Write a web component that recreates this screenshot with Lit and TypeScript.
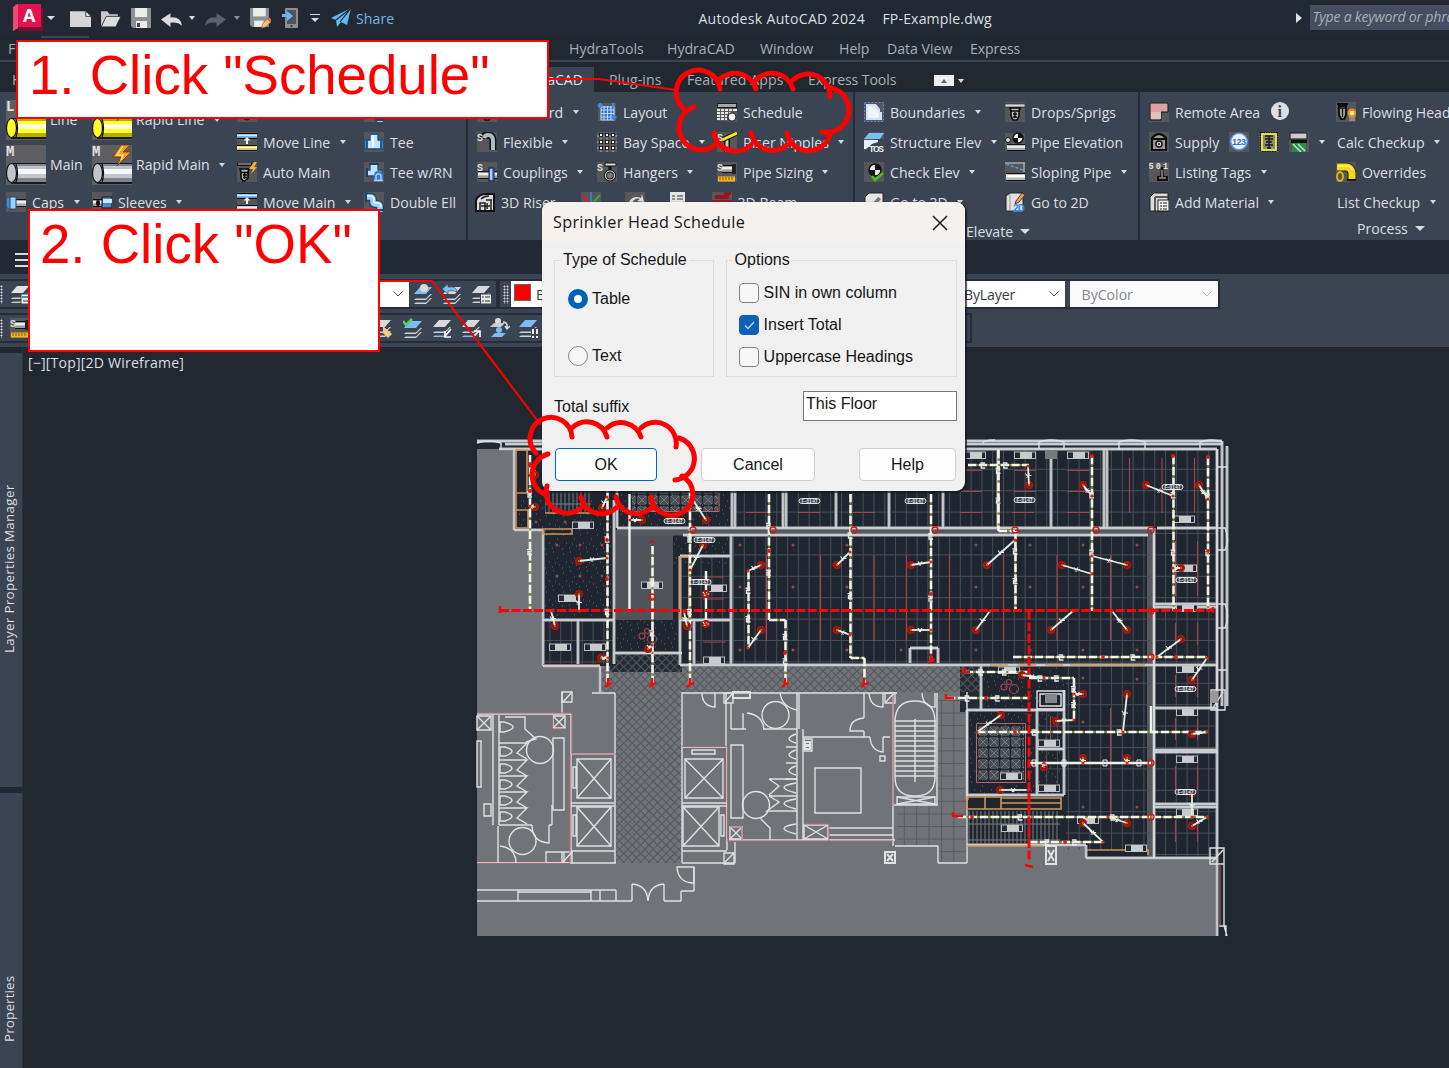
import { LitElement, html, svg, css, nothing } from "lit";
import { customElement, property } from "lit/decorators.js";

/* ---------- icon artwork ---------- */

const tile = svg`<rect width="20" height="20" fill="#57575a"/>`;
const ess = svg`<text x="0" y="9" font-size="10" font-weight="700" fill="#d8d8d8" font-family="Liberation Mono">S</text>`;

const pipe = (x: number, y: number, w: number, h: number, c: string, hi: string) => svg`
  <rect x=${x} y=${y} width=${w} height=${h} fill="#111"/>
  <rect x=${x} y=${y + 1} width=${w} height=${h - 2} fill=${c}/>
  <rect x=${x} y=${y + h * 0.25} width=${w} height=${h * 0.3} fill=${hi}/>`;

const sheets = (c1: string, c2: string, c3: string, x = 0, y = 0) => svg`
  <g transform="translate(${x} ${y})">
    <path d="M7 8h12l-6 6H1z" fill=${c3} transform="translate(0 5)"/>
    <path d="M7 8h12l-6 6H1z" fill="#3b4453" transform="translate(0 3.5)"/>
    <path d="M7 8h12l-6 6H1z" fill=${c2} transform="translate(0 1)"/>
    <path d="M7 8h12l-6 6H1z" fill="#3b4453" transform="translate(0 -.5)"/>
    <path d="M7 2h12l-6 7H1z" fill=${c1}/>
  </g>`;

const bigPipe = (letter: string, c: string, mid: string, hi: string, bolt: boolean) => svg`
  <rect width="40" height="40" fill="#5f5f61"/>
  <text x="0" y="11" font-size="14" font-weight="700" fill="#e2e2e2" font-family="Liberation Mono">${letter}</text>
  <rect x="5" y="18" width="35" height="21" fill="#1a1a1a"/>
  <rect x="5" y="19" width="35" height="18" fill=${c}/>
  <rect x="10" y="21" width="30" height="12" fill=${mid}/>
  <rect x="10" y="24" width="30" height="5" fill=${hi}/>
  <ellipse cx="5.5" cy="28" rx="5" ry="9.5" fill=${mid} stroke="#111" stroke-width="1.2"/>
  <path d="M10 19q3 9 0 18" fill="none" stroke="#111" stroke-width="1.3"/>
  ${bolt ? svg`<path d="M29 0 21 12h8l-4 9 14-14h-8l7-7z" fill="#ff9a1a" stroke="#7a3b00" stroke-width=".8"/><path d="M31 1l-6 9h6l-2 5" fill="none" stroke="#ffe9a0" stroke-width="1.3"/>` : nothing}`;

const icons: Record<string, unknown> = {
  line: bigPipe("L", "#b5ad00", "#ffff2a", "#ffffd8", false),
  rapidLine: bigPipe("L", "#b5ad00", "#ffff2a", "#ffffd8", true),
  main: bigPipe("M", "#7c8490", "#c0c5ce", "#f7f8fa", false),
  rapidMain: bigPipe("M", "#7c8490", "#c0c5ce", "#f7f8fa", true),
  caps: svg`${tile}${pipe(9, 7, 11, 8, "#aaa", "#eee")}<rect x="1" y="6" width="4" height="10" rx="2" fill="#3b8ee0"/><rect x="4" y="5" width="6" height="12" fill="#9ad2ff" stroke="#1b4c8a"/>`,
  sleeves: svg`${tile}${pipe(1, 7, 10, 8, "#999", "#eee")}<rect x="10" y="5" width="10" height="11" fill="#4c86d0" stroke="#111"/><rect x="11" y="7" width="9" height="4" fill="#cfe8ff"/><ellipse cx="6" cy="11" rx="2" ry="3" fill="#111"/>`,
  sprink: svg`${tile}<path d="M0 2h20v2H0z" fill="#ddd"/><path d="M5 6h10M6 9h8M6 9v6q4 5 8 0V9M10 8v8" stroke="#111" stroke-width="2" fill="none"/>`,
  moveLine: svg`${tile}${pipe(0, 1, 20, 6, "#4f9ae0", "#d7efff")}${pipe(0, 13, 20, 6, "#d8c860", "#fff6b0")}<path d="M10 5 6.500 8.500h2.500V12h2V8.500h2.500z" fill="#eee"/>`,
  autoMain: svg`<rect y="2" width="20" height="18" fill="#57575a"/><path d="M0 1h15v3H0z" fill="#111"/><path d="M1 2h13" stroke="#ccc"/><path d="M3 7h9l-1 3v6l-3 3H6l-2-3v-6z" fill="#b5b5b5" stroke="#0a0a0a" stroke-width="1.600"/><path d="M4 10.500h8M6 13h4M6 15.500h4M7.500 11v6" stroke="#0a0a0a" stroke-width="1.300" fill="none"/><path d="M17 0l-5 7h4l-2 5 6-7h-3l3-5z" fill="#ffb02a"/>`,
  moveMain: svg`${tile}${pipe(0, 1, 20, 6, "#4f9ae0", "#d7efff")}${pipe(0, 13, 20, 6, "#aaa", "#f2f2f2")}<path d="M10 5 6.500 8.500h2.500V12h2V8.500h2.500z" fill="#eee"/>`,
  tee: svg`${tile}<path d="M6 2h8v6h5v9H1V8h5z" fill="#bfe4fb" stroke="#1b4c7a" stroke-width="1.3"/><path d="M5 2h10M3 6v12M17 6v12" stroke="#1d5b96" stroke-width="2"/><path d="M9 3v12" stroke="#fff" stroke-width="2"/>`,
  teeRn: svg`${tile}<path d="M6 2h8v6h4v6H3V8h3z" fill="#bfe4fb" stroke="#1b4c7a" stroke-width="1.3"/><path d="M5 2h10M3 6v9" stroke="#1d3e66" stroke-width="2"/><path d="M10 18v-5q0-4 4.500-4t4.500 4v5z" fill="#3a78cc"/><path d="M12 18v-4q0-2 2.500-2t2.500 2v4M10 18.500h9" stroke="#a9d4ff" stroke-width="1.3" fill="none"/>`,
  ell: svg`${tile}<path d="M1 5h5q3 0 3 3v2q0 2 3 2h1q3 0 3 3v5" fill="none" stroke="#17456f" stroke-width="8"/><path d="M1 5h5q3 0 3 3v2q0 2 3 2h1q3 0 3 3v5" fill="none" stroke="#9bd3f7" stroke-width="5.500"/><path d="M1 4h5q4 0 4 4v2q0 1 3 1 4 0 4 4" fill="none" stroke="#e9f7ff" stroke-width="1.600"/><path d="M2 0v10M11 18h9" stroke="#17456f" stroke-width="2"/>`,
  flexible: svg`${tile}<path d="M6 7q0-4 5-4 5 0 5 6v9" fill="none" stroke="#111" stroke-width="7"/><path d="M7 6q1-3 4-3 5 0 5 6v9" fill="none" stroke="#a8c0c4" stroke-width="4"/>${ess}`,
  couplings: svg`${tile}${pipe(1, 9, 19, 8, "#999", "#eee")}<rect x="12" y="6" width="5" height="13" fill="#4d86d8" stroke="#123"/><path d="M14 7v11" stroke="#d6eaff" stroke-width="1.4"/>${ess}`,
  riser: svg`<path d="M1 18V8q3-6 10-6h8v17H1z" fill="#dcdcdc" stroke="#111" stroke-width="2"/><path d="M5 18v-7h5v7M6 7q3-3 8-3M11 8h6M12 11v6M16 8v10M6 14h9" stroke="#222" stroke-width="1.500" fill="none"/>`,
  layout: svg`<rect x="1" y="1" width="18" height="18" fill="#57575a"/><path d="M4 5h13v13H4zM4 8h13M4 11.500h13M4 15h13M7 4v14M10.500 4v14M14 4v14" fill="#2f6dbd" stroke="#bcd9fb" stroke-width="1.100"/><path d="M3 1v5M.500 3.500h5M17 13v5M14.500 15.500h5M16 1v5" stroke="#3a8cf0" stroke-width="2"/>`,
  bay: svg`${tile}<path d="M0 4h20M0 10h20M0 16h20M4 0v20M10 0v20M16 0v20" stroke="#c2c2c2"/><g fill="#111">${[4, 10, 16].map((x) => [3, 10, 16].map((y) => svg`<circle cx=${x} cy=${y} r="2.400"/><circle cx=${x} cy=${y} r="1.200" fill="#fff"/>`))}</g>`,
  hangers: svg`${tile}<path d="M8 1h11v3H8z" fill="#ddd" stroke="#111"/><path d="M13 4v5" stroke="#111" stroke-width="3"/><circle cx="13" cy="13.500" r="4.500" fill="#777" stroke="#111" stroke-width="3"/><circle cx="13" cy="13.500" r="4.500" fill="none" stroke="#ddd" stroke-width="1.200"/>${ess}`,
  schedule: svg`<path d="M0 1h20v5H0z" fill="#1c1c1c"/><path d="M1 2h18v3H1z" fill="#a5a5a8"/><path d="M0 6h20v13H0z" fill="#e8e8e8"/><path d="M0 6.500h20M0 9.500h20M0 12.500h20M0 15.500h11M0 18.500h11M3.500 6v13M7.500 6v13M11.500 6v8M15.500 6v5" stroke="#5a5a5a"/><path d="M10 20v-6q2-4 6-4h4v10z" fill="#57575a"/><circle cx="15" cy="15" r="4" fill="#f4f4f4" stroke="#222" stroke-width="1.200"/>`,
  nipple: svg`${tile}<path d="M10 7v13" stroke="#111" stroke-width="6"/><path d="M10 8v12" stroke="#ccc" stroke-width="3"/><path d="M5 8 20 1" stroke="#111" stroke-width="5"/><path d="M5 8 20 1" stroke="#f0e61c" stroke-width="3"/>${ess}`,
  sizing: svg`${tile}${pipe(5, 3, 14, 8, "#999", "#eee")}<rect x="15" y="2" width="4" height="10" fill="#222"/><rect x="1" y="14.500" width="17" height="5" fill="#f3b722"/><path d="M3 15v3M6 15v3M9 15v3M12 15v3M15 15v3" stroke="#7a5200"/>${ess}`,
  ucs: svg`${tile}<path d="M10 10V0" stroke="#3a78cc" stroke-width="2"/><path d="M9 12 1 3" stroke="#c22" stroke-width="2"/><path d="M11 12l8-9" stroke="#3a3" stroke-width="2"/>`,
  refresh: svg`${tile}<path d="M4 10q4-7 12-4l1-4 2 8-7-1 3-2q-5-2-8 4z" fill="#ddd"/>`,
  tag: svg`<path d="M2 0h15v10H2z" fill="#e4e4e4"/><path d="M4 4h3M9 4h6M4 7h3M9 7h6" stroke="#333"/>`,
  valve: svg`${tile}<path d="M3 5h13M12 1h7M15 1v6M0 10h20" stroke="#a0141e" stroke-width="4"/>`,
  boundaries: svg`<rect x=".500" y=".500" width="19" height="19" fill="#57575a" stroke="#4b8fe8" stroke-dasharray="2 1.500"/><path d="M2 2h10l4 5v3h2v8H2z" fill="#d5e2f2"/><path d="M4 4h6l4 5v2h1v5H4z" fill="#eef4fb"/>`,
  tos: svg`<path d="M0 20V6L6 0h14v7h-9z" fill="#555"/><path d="M5 1h15l-4 6H0z" fill="#79c0f4"/><path d="M0 8h14v2L8 12 2 17H0z" fill="#e9eef2"/><text x="5" y="19.500" font-size="8.500" font-weight="700" fill="#f2f2f2" font-family="Liberation Sans" textLength="15">TOS</text>`,
  checkElev: svg`${tile}<circle cx="11" cy="8" r="6" fill="#e8e8e8" stroke="#111" stroke-width="1.500"/><path d="M11 2a6 6 0 0 1 6 6h-6zM11 14a6 6 0 0 1-6-6h6z" fill="#111"/><path d="M8 14l3 4 8-7" stroke="#4fb81e" stroke-width="2.600" fill="none"/>`,
  to3d: svg`<path d="M1 20V5l4-4h14v19z" fill="#e6e6e6" stroke="#222"/><path d="M8 12l6-7 3 2-6 7z" fill="#777"/>`,
  drops: svg`${tile}<rect width="20" height="3" y="2" fill="#d9d9d9" stroke="#111" stroke-width=".600"/><path d="M5 6h10l-1 3v5l-2 4H8l-2-4V9z" fill="#b9b9b9" stroke="#0a0a0a" stroke-width="1.600"/><path d="M5 9h10M8 12h4M10 10v6M8 15h4" stroke="#0a0a0a" stroke-width="1.300"/>`,
  pipeElev: svg`<rect y="1" width="20" height="18" fill="#57575a"/>${pipe(2, 12, 18, 7, "#aaa", "#eee")}<circle cx="13" cy="6" r="5" fill="#eee" stroke="#111" stroke-width="1.400"/><path d="M13 1a5 5 0 0 1 5 5h-5zM13 11a5 5 0 0 1-5-5h5z" fill="#111"/><circle cx="3" cy="8" r="2.500" fill="#ddd" stroke="#111"/>`,
  sloping: svg`${tile}<path d="M0 1h20M19 1v9" stroke="#ccc"/><path d="M1 2l17 6" stroke="#5a9be8" stroke-width="1.600" stroke-dasharray="3 2"/>${pipe(1, 11, 19, 8, "#bbb", "#fff")}`,
  to2d: svg`<path d="M1 19V4l4-3h13v18z" fill="#e0e0e0" stroke="#222"/><path d="M5 2v17" stroke="#999"/><path d="M11 9l6-8 3 2-6 7-4 2z" fill="#e7a33a" stroke="#633"/><text x="8" y="19.500" font-size="10" font-weight="700" fill="#2b8af0" font-family="Liberation Sans" textLength="12">2D</text>`,
  remote: svg`${tile}<path d="M1 1h18v9h-7v8H1z" fill="#d9a3a5" stroke="#111"/><path d="M2 10h10v7H2z" fill="#e0c2c2"/>`,
  info: svg`<circle cx="10" cy="9" r="9" fill="#dcdee0"/><text x="7.500" y="15" font-size="16" font-weight="700" fill="#3b4453" font-family="Liberation Serif">i</text>`,
  supply: svg`${tile}<path d="M3 6q7-8 14 0v12H3z" fill="#999" stroke="#0a0a0a" stroke-width="2"/><path d="M2 7h16M3 18h14" stroke="#0a0a0a" stroke-width="2"/><circle cx="10" cy="12" r="3" fill="#ddd" stroke="#111" stroke-width="1.500"/><circle cx="10" cy="12" r="1" fill="#111"/>`,
  n123: svg`${tile}<circle cx="10" cy="9.500" r="9" fill="#5b9cf2"/><circle cx="10" cy="9.500" r="7.500" fill="#f2f7ff"/><text x="3" y="13" font-size="9" font-weight="700" fill="#2c6fdc" font-family="Liberation Sans" textLength="14">123</text>`,
  headBox: svg`<rect width="20" height="20" fill="#57575a"/><rect x="2" y="1" width="16" height="18" fill="#8a8a70" stroke="#111" stroke-width="2.500" stroke-dasharray="1.500 1"/><rect x="3" y="2" width="14" height="16" fill="#8a8a70" stroke="#f0ee4a" stroke-width="1.800"/><path d="M6 4h8M6 7h8M7 10h6M6 13h8M8 16h4M10 4v13" stroke="#1a1a1a" stroke-width="1.300"/>`,
  calc: svg`${tile}<rect x="1" y="1" width="17" height="6" fill="#ccc" stroke="#111"/><rect x="2" y="8" width="16" height="3" fill="#111"/><rect x="3" y="11" width="14" height="9" fill="#2a8a50"/><path d="M4 12l8 8M9 12l7 7" stroke="#bfe8cc" stroke-width="1.500"/>`,
  tags: svg`${tile}<text x="-.500" y="7" font-size="8.500" font-weight="700" fill="#e2e2e2" font-family="Liberation Mono" textLength="19.500">501</text><path d="M12 5h2l1 9h4v5H8v-5h3z" fill="#111"/><path d="M10 16h7M13 8v7" stroke="#ccc"/>`,
  material: svg`<path d="M1 19V5l4-4h14v18z" fill="#dcdcdc" stroke="#222"/><path d="M6 5h13M6 5v14" stroke="#333" stroke-width="1.500"/><rect x="9" y="8" width="11" height="11" fill="#f2f2f2" stroke="#222"/><path d="M11 11h2M14 11h4M11 14h2M14 14h4M11 17h2M14 17h4" stroke="#222" stroke-width="1.200"/>`,
  flowing: svg`${tile}<path d="M1 2h11M3 4h7v9l-2 4H5l-2-4z" stroke="#0a0a0a" stroke-width="1.800" fill="#a5a5a5"/><path d="M3 6h7M6.500 7v8" stroke="#0a0a0a" stroke-width="1.300"/><rect x="13" y="9" width="6" height="10" fill="#8a8a8a"/><circle cx="16" cy="11" r="4.500" fill="#f08a24"/><circle cx="16" cy="11" r="2.300" fill="#fff3a0"/>`,
  overrides: svg`${tile}<path d="M1 5h9q5 0 6 6v6" stroke="#222" stroke-width="9" fill="none"/><path d="M1 5h9q5 0 6 6v6" stroke="#f5d815" stroke-width="7" fill="none"/><path d="M2 4h8q5 0 6 4" stroke="#fff27a" stroke-width="1.500" fill="none"/><path d="M11 18h9" stroke="#111" stroke-width="2"/><ellipse cx="4" cy="14.500" rx="3" ry="4.500" fill="#57575a" stroke="#e2b90c" stroke-width="1.800"/>`,

  newFile: svg`<path d="M0 3h15l5 5v10H0z" fill="#d6d6d6"/><path d="M15 3v5h5z" fill="#f5f5f5" stroke="#222932" stroke-width=".8"/>`,
  open: svg`<path d="M1 18V3h6l2 3h8v3H6z" fill="#c9c9c9"/><path d="M6 8h14l-5 10H1z" fill="#dcdcdc" stroke="#222932" stroke-width=".8"/>`,
  save: svg`<path d="M0 0h20v20H2l-2-2z" fill="#8d9092"/><rect x="4" y="0" width="12" height="9" fill="#ececec"/><rect x="5" y="13" width="11" height="7" fill="#ececec"/><rect x="6" y="15" width="3" height="4" fill="#444"/>`,
  undo: svg`<path d="M0 11 9 5v4q10-1 11 8-4-4-11-3v4z" fill="#dcdcdc"/>`,
  redo: svg`<path d="M20 11 11 5v4Q1 8 0 17q4-4 11-3v4z" fill="#5a616b"/>`,
  saveAs: svg`<path d="M0 0h18v18H2l-2-2z" fill="#8d9092"/><rect x="3" y="0" width="12" height="8" fill="#ececec"/><rect x="4" y="12" width="9" height="6" fill="#ececec"/><path d="M11 19l1-4 6-6 3 3-6 6z" fill="#f4c469" stroke="#a0522d" stroke-width=".6"/><path d="M17 10l3 3" stroke="#e2574c" stroke-width="2"/>`,
  phone: svg`<rect x="4" y="0" width="13" height="20" rx="1" fill="#8b8f94"/><rect x="6" y="2" width="9" height="14" fill="#4d545e"/><circle cx="10.500" cy="18" r="1" fill="#222"/><path d="M1 6h5V3l6 5-6 5V9H1z" fill="#62b8f5"/>`,
  plane: svg`<path d="M0 10 20 0 16 17l-6-3-4 5-1-7z" fill="#62b8f5"/><path d="M5 12 20 0 9 14" fill="none" stroke="#222932" stroke-width="1.200"/>`,

  layerProps: svg`${sheets("#e3e3e3", "#d3d3d3", "#c8c8c8")}<rect x="11" y="10" width="10" height="10" fill="#f2f2f2" stroke="#3b4453"/><path d="M12 13h6" stroke="#3a8cd8" stroke-width="2"/><path d="M13 17h5" stroke="#333"/>`,
  layerMatch: svg`${sheets("#7cbdf2", "#d3d3d3", "#d3d3d3", 0, 1)}<circle cx="11" cy="4" r="4" fill="#d9d9d9"/>`,
  layerPrev: svg`${sheets("#d9d9d9", "#d3d3d3", "#d3d3d3", 0, 1)}<path d="M0 5l6-5v3q9-1 9 5-3-2-9-1v3z" fill="#7cbdf2" stroke="#3b4453" stroke-width=".6"/>`,
  layerState: svg`${sheets("#d9d9d9", "#d3d3d3", "#d3d3d3")}<rect x="9.500" y="10" width="11" height="10" fill="#e9e9e9" stroke="#3b4453"/><path d="M11 13h2M14 13h5M11 17h2M14 17h5" stroke="#333"/>`,
  layerBrush: svg`${sheets("#d9d9d9", "#d3d3d3", "#d3d3d3", -2)}<path d="M9 8l9 8-4 4-5-5z" fill="#f0cf8a"/>`,
  layerCheck: svg`${sheets("#7cbdf2", "#d3d3d3", "#d3d3d3", 0, 1)}<path d="M0 3l3 4 6-6" stroke="#59cf72" stroke-width="2.500" fill="none"/>`,
  layerArrow: svg`${sheets("#d9d9d9", "#d3d3d3", "#7cbdf2")}<path d="M19 11l-6 7m0-5v6h6" stroke="#fff" stroke-width="1.600" fill="none"/>`,
  layerArrow2: svg`${sheets("#d9d9d9", "#d3d3d3", "#7cbdf2")}<path d="M12 19l6-6m-5 0h6v6" stroke="#fff" stroke-width="1.600" fill="none"/>`,
  layerOne: svg`<circle cx="8" cy="3" r="3" fill="#ddd"/><path d="M4 5h11l-4 4H0z" fill="#ccc"/><circle cx="9" cy="12" r="3" fill="#7cbdf2"/><path d="M5 15h11l-4 4H1z" fill="#7cbdf2"/><path d="M13 4q5 0 4 6m-2-2 2 3 3-3" stroke="#ddd" stroke-width="1.400" fill="none"/>`,
  layerLast: svg`${sheets("#7cbdf2", "#d3d3d3", "#d3d3d3", -1)}<path d="M12 10h8v10h-8z" fill="#3b4453"/><path d="M14 11v5M18 11v5M14 18v2M18 18v2" stroke="#eee" stroke-width="2"/>`,
};

@customElement("cad-icon")
class CadIcon extends LitElement {
  @property() name = "";
  @property({ type: Number }) size = 20;
  static styles = css`
    :host { display: block; flex: none; }
    svg { display: block; overflow: hidden; }
  `;
  render() {
    const box = this.size === 40 ? 40 : 20;
    return html`<svg width=${this.size} height=${this.size} viewBox="0 0 ${box} ${box}">${icons[this.name] ?? nothing}</svg>`;
  }
}

/* ---------- ribbon command ---------- */

interface Cmd { icon?: string; label?: string; caret?: boolean; big?: boolean; extras?: string[]; }

@customElement("ribbon-cmd")
class RibbonCmd extends LitElement {
  @property({ attribute: false }) cmd: Cmd = {};
  static styles = css`
    :host { display: block; }
    .cmd { display: flex; align-items: center; height: 30px; white-space: nowrap; }
    .big { height: 45px; }
    .label { margin-left: 6px; }
    .big .label { margin-left: 4px; }
    .flush { margin-left: 1px; }
    .caret { width: 0; height: 0; margin-left: 9.5px; border: 3.5px solid transparent; border-top: 4px solid #d5d8dc; border-bottom: 0; flex: none; }
    .extra { margin-left: 10px; }
  `;
  render() {
    const c = this.cmd;
    return html`<div class="cmd ${c.big ? "big" : ""}">
      ${c.icon ? html`<cad-icon name=${c.icon} size=${c.big ? 40 : 20}></cad-icon>` : nothing}
      ${c.label ? html`<span class="label ${c.icon ? "" : "flush"}">${c.label}</span>` : nothing}
      ${(c.extras ?? []).map((n) => html`<cad-icon class="extra" name=${n}></cad-icon>`)}
      ${c.caret ? html`<span class="caret"></span>` : nothing}
    </div>`;
  }
}

/* ---------- floor plan ---------- */

type P4 = [number, number, number, number];
const seg = (list: P4[]) => list.map(([a, b, c, d]) => `M${a} ${b}L${c} ${d}`).join("");
const boxes = (list: P4[]) => list.map(([x, y, w, h]) => `M${x} ${y}h${w}v${h}h${-w}z`).join("");

const gridRooms: P4[] = [
  [735, 449, 48, 78], [786, 449, 50, 78], [839, 449, 50, 78], [892, 449, 51, 78], [945, 449, 53, 78],
  [1000, 449, 50, 78], [1053, 449, 51, 78], [1107, 449, 110, 78], [733, 536, 418, 128],
  [544, 620, 34, 44], [580, 620, 33, 44], [682, 556, 48, 64], [695, 622, 35, 42],
  [1155, 530, 62, 328], [1066, 666, 86, 184], [1040, 710, 24, 85],
];

const pipes: P4[] = [
  [530, 455, 530, 611], [607.5, 490, 607.5, 686], [652.5, 546, 652.5, 686], [690, 490, 690, 686],
  [748.500, 571, 748.500, 648], [769, 494, 769, 620], [769, 620, 785.500, 620], [785.500, 620, 785.500, 686],
  [850.500, 494, 850.500, 658], [850.500, 658, 864.500, 658], [864.500, 658, 864.500, 686], [931, 494, 931, 662],
  [998.500, 450, 998.500, 531], [998.500, 531, 1015, 531], [1015.500, 531, 1015.500, 611], [968, 465, 1029, 465],
  [1092, 456, 1092, 611], [1173.500, 456, 1173.500, 611], [1208, 457, 1208, 611], [1013, 657, 1207, 657],
  [965, 672, 1029, 672], [947, 698, 1029, 698], [977, 732, 1207, 732], [958, 817, 1208, 817], [1029, 842, 1103, 842],
  [1029, 678, 1074, 678], [1074, 678, 1074, 721],
];

const solidPipes: P4[] = [[629.500, 494, 629.500, 611], [706, 571, 706, 624], [1030, 763, 1151, 763], [1151, 706, 1151, 732]];

/* sprinkler head position followed by its branch connection */
const heads: P4[] = [
  [579, 561, 607, 558], [579, 594, 579, 611], [555, 626, 551, 611], [535, 475, 530, 466], [535, 507, 530, 506],
  [602, 508, 607, 497], [642, 520, 630, 520], [706, 520, 691, 497], [703, 545, 690, 570], [601, 658, 608, 658],
  [648, 649, 652, 645], [687, 626, 684, 612], [706, 594, 706, 594], [706, 624, 706, 624], [761, 565, 748, 571], [761, 630, 748, 648],
  [837, 565, 850, 552], [837, 630, 850, 635], [911, 565, 931, 562], [911, 630, 931, 630],
  [987, 565, 1015, 540], [976, 630, 990, 611], [1062, 565, 1092, 574], [1127, 565, 1092, 556], [1051, 630, 1073, 611],
  [1127, 630, 1112, 611], [1029, 485, 1028, 466], [1083, 485, 1092, 496], [1146, 485, 1173, 496], [1199, 485, 1208, 499],
  [1181, 568, 1173, 568], [1181, 639, 1157, 657], [1192, 680, 1207, 658], [1127, 694, 1123, 732], [1083, 694, 1074, 694],
  [1056, 721, 1074, 720], [1001, 715, 977, 732], [1000, 790, 1028, 790], [1022, 675, 1044, 678], [1044, 767, 1044, 763],
  [1083, 758, 1083, 763], [1127, 758, 1127, 763], [1192, 734, 1207, 732], [1192, 793, 1192, 817], [1192, 826, 1207, 817],
  [1083, 823, 1103, 842], [1127, 823, 1108, 817],
];

const lamps: [number, number][] = [
  [583, 525], [569, 598], [652, 585], [560, 647], [595, 647], [716, 588], [714, 660], [975, 455], [1025, 455], [1078, 455],
  [1184, 519], [1186, 568], [1187, 608], [1187, 669], [1187, 712], [1187, 759], [1187, 812], [1009, 670], [1049, 743], [1049, 788],
  [1011, 776], [1012, 828], [1088, 820], [1136, 848],
];

const badges: [number, number][] = [[674, 521], [704, 540], [700, 582], [809, 501], [915, 501], [1024, 500], [1172, 487], [1186, 580], [1185, 689], [1185, 792]];

const redLines: P4[] = [
  ...[766.500, 820.500, 874, 906.500, 949.500, 1003.500, 1057, 1110.500].map((x) => [x, 555, x, 641] as P4),
  ...[746, 798, 853, 960, 1012].map((x) => [x, 512.500, x + 22, 512.500] as P4),
  ...[[960, 491], [960, 470], [1014, 491], [1014, 470], [1067, 491], [1067, 470], [1067, 512]].map(([x, y]) => [x, y + 0.5, x + 22, y + 0.5] as P4),
  ...[1129.500, 1162, 1194.500].map((x) => [x, 458, x, 513] as P4),
  ...[[541, 596], [623, 645], [675, 697], [718, 740], [766, 790], [820, 842]].flatMap(([a, b]) => [[1175.500, a, 1175.500, b], [1197.500, a, 1197.500, b]] as P4[]),
  [1110.500, 708, 1110.500, 816], [1050.500, 716, 1050.500, 740], [703, 642, 726, 642], [703, 577, 724, 577], [703, 599, 724, 599],
];

const walls: P4[] = [
  [477, 441, 1222, 441], [505, 444, 1222, 444], [499, 449, 1217, 449], [1222, 441, 1222, 706], [1227, 446, 1227, 706], [1217, 449, 1217, 936],
  [514, 449, 514, 530], [514, 530, 543, 530], [543, 530, 543, 666], [543, 666, 600, 666], [600, 666, 600, 692], [543, 620, 614, 620],
  [578, 620, 578, 664], [614, 500, 614, 664], [617, 480, 617, 528], [617, 528, 1153, 528], [732, 449, 732, 528], [735, 449, 735, 528],
  [783, 490, 783, 528], [786, 490, 786, 528], [836, 490, 836, 528], [889, 490, 889, 528], [943, 490, 943, 528], [998, 449, 998, 528],
  [1051, 449, 1051, 528], [1104, 449, 1104, 528], [1107, 449, 1107, 528], [683, 535, 1148, 535], [731, 535, 731, 664],
  [680, 556, 730, 556], [680, 556, 680, 665], [694, 620, 694, 664], [680, 620, 730, 620], [614, 653, 682, 653], [680, 665, 1217, 665],
  [1154, 528, 1154, 858], [1157, 528, 1217, 528], [1155, 604, 1217, 604], [1155, 607, 1217, 607], [1155, 708, 1217, 708],
  [1155, 750, 1217, 750], [1155, 752, 1217, 752], [1155, 804, 1217, 804], [1155, 807, 1217, 807],
  [981, 666, 981, 710], [967, 710, 1064, 710], [967, 710, 967, 800], [1037, 710, 1037, 795], [1064, 690, 1064, 795], [1038, 749, 1064, 749],
  [967, 795, 1064, 795], [967, 845, 1086, 845], [1086, 845, 1086, 858], [1086, 858, 1217, 858], [910, 648, 938, 648], [910, 648, 910, 663], [938, 648, 938, 663],
];

const greyWalls: P4[] = [
  [477, 714, 571, 714], [571, 714, 571, 754], [592, 693, 615, 693], [615, 693, 615, 863], [562, 692, 562, 714], [493, 715, 493, 825], [499, 715, 499, 825],
  [499, 825, 532, 825], [549, 825, 552, 825], [477, 863, 616, 863], [498, 826, 498, 863], [571, 754, 571, 863], [571, 803, 614, 803], [571, 806, 614, 806],
  [571, 754, 615, 754], [571, 851, 615, 851], [682, 692, 682, 863], [682, 747, 727, 747], [727, 747, 727, 850], [682, 803, 727, 803], [682, 806, 727, 806],
  [682, 851, 727, 851], [682, 863, 735, 863], [735, 842, 735, 863], [682, 693, 897, 693], [726, 693, 726, 747], [731, 704, 731, 729], [731, 729, 746, 729],
  [763, 729, 797, 729], [797, 693, 797, 840], [803, 729, 803, 840], [799, 693, 799, 729], [803, 737, 870, 737], [883, 737, 890, 737], [864, 693, 864, 718], [864, 731, 864, 737],
  [729, 840, 895, 840], [829, 828, 893, 828], [829, 835, 893, 835], [893, 693, 893, 846], [895, 846, 938, 846], [938, 846, 938, 863], [938, 863, 967, 863],
  [967, 692, 967, 863], [937, 693, 937, 805], [893, 805, 938, 805], [477, 890, 616, 890], [477, 901, 632, 901], [616, 890, 616, 901], [518, 890, 518, 901], [591, 890, 591, 901],
  [600, 890, 600, 901], [632, 884, 632, 901], [664, 884, 664, 901], [664, 901, 681, 901], [681, 891, 681, 901], [681, 891, 694, 891], [694, 867, 694, 891],
  [518, 892, 591, 892], [743, 713, 743, 729],
];

const fixtures: P4[] = [
  [562, 692, 10, 10], [477, 716, 14, 14], [553, 716, 12, 12], [553, 738, 11, 72], [484, 804, 7, 12], [546, 852, 18, 11], [562, 852, 10, 11],
  [577, 759, 34, 39], [577, 807, 34, 39], [573, 767, 3, 21], [573, 815, 3, 21], [685, 759, 38, 39], [683, 807, 36, 39], [721, 815, 3, 21], [692, 750, 23, 4],
  [731, 745, 12, 73], [730, 827, 12, 12], [804, 825, 24, 14], [815, 768, 46, 45], [804, 739, 8, 12], [724, 693, 9, 10], [724, 853, 10, 11], [897, 797, 38, 7], [885, 693, 10, 10],
  [880, 756, 5, 5], [477, 741, 4, 46],
];

const crossed: P4[] = [[477, 716, 14, 14], [553, 716, 12, 12], [577, 759, 34, 39], [577, 807, 34, 39], [685, 759, 38, 39], [683, 807, 36, 39], [730, 827, 12, 12], [804, 825, 24, 14], [897, 797, 38, 7]];

@customElement("floor-plan")
class FloorPlan extends LitElement {
  static styles = css`
    :host { display: block; }
    svg { display: block; }
    .grey { fill: #707378; }
    .tile { fill: none; stroke: #dfe1e3; stroke-width: 1.4; }
    .wall-back { fill: none; stroke: #8a8d92; stroke-width: 3.4; }
    .wall { fill: none; stroke: #e0e2e4; stroke-width: 1.3; }
    .pipe { fill: none; stroke: #f3f5ee; stroke-width: 2.6; stroke-dasharray: 8.6 2.2; }
    .pipe-core { fill: none; stroke: #8a8a20; stroke-width: 1.8; stroke-dasharray: 2.2 8.6; stroke-dashoffset: 2.2; }
    .solid { fill: none; stroke: #eef3ec; stroke-width: 2.4; }
    .branch { stroke: #dff0e2; stroke-width: 1.8; }
    .red { fill: none; stroke: #a3454a; stroke-width: 1.1; }
    .main { fill: none; stroke: #fa0505; stroke-width: 3; stroke-dasharray: 9 2.4; }
    .hook { fill: none; stroke: #f40808; stroke-width: 2.4; }
    .orange { fill: none; stroke: #d0955a; stroke-width: 1.6; }
    .badge { fill: #e9ebec; font: 700 4.500px "Liberation Sans", sans-serif; }
  `;
  render() {
    const hooks = [[608, 684], [652, 684], [690, 684], [785, 684], [864, 684], [931, 660]];
    return html`<svg width="1427" height="721" viewBox="22 347 1427 721">
      <defs>
        <pattern id="g" width="10.8" height="21.400" patternUnits="userSpaceOnUse" x="733" y="533"><path d="M.500 0v21.400M0 .500h10.800" stroke="#494e55" fill="none"/></pattern>
        <pattern id="x" width="6" height="6" patternUnits="userSpaceOnUse" patternTransform="rotate(45)"><path d="M.500 0v6M0 .500h6" stroke="#54585e" fill="none"/></pattern>
        <pattern id="t" width="12.400" height="12.600" patternUnits="userSpaceOnUse" x="941" y="700"><path d="M.500 0v13M0 .500h13" stroke="#575b61" fill="none"/></pattern>
        <pattern id="s" width="17" height="19" patternUnits="userSpaceOnUse"><path d="M2 3h1M9 1h1M13 7h1M5 11h1M15 14h1M8 16h1M1 17h1M11 12h1" stroke="#666b72"/></pattern>
        <pattern id="c" width="11" height="11" patternUnits="userSpaceOnUse" x="978" y="726"><path d="M1 1h8v8h-8zM3 3h4v4h-4zM1 1l8 8M9 1l-8 8" stroke="#85888c" stroke-width=".8" fill="none"/></pattern>
        <pattern id="b" width="4" height="16" patternUnits="userSpaceOnUse"><path d="M1 0v16M0 8h4" stroke="#777a7e" fill="none"/></pattern>
      </defs>
      <path class="grey" d="M477 449H514V530H543V666H600V692H967V845H1086V858H1217V936H477z"/>
      <path d="M514 444H1222V858H1086V845H967V692H960V666H543V530H514z" fill="#20262f"/>
      <path class="grey" d="M600 666H960V700H967V863H600z"/>
      <path d="M516 500h98v120h-70v-90h-28zM617 490h116v38h-116zM673 535h58v30h-58zM615 620h66v33h-66zM967 666h97v130h-97z" fill="url(#s)"/>
      <path d="M614 530h59v90h-59z" fill="#50545a"/>
      <path d="M617 528.500h536v7h-536zM1147 530h6v328h-6z" fill="#565a60"/>
      <path d=${boxes(gridRooms)} fill="url(#g)"/>
      <rect x="610" y="654" width="72" height="18" fill="#252b33"/><rect x="960" y="666" width="21" height="46" fill="#252b33"/>
      <path d="M600 666h380v26h-380zM616 654h66v209h-66z" fill="url(#x)"/>
      <path d="M938 700h29v163h-29zM897 806h41v39h-41z" fill="url(#t)"/>
      <path d="M978 726h46v55h-46zM632 490h86v21h-86z" fill="url(#c)"/>
      <path d="M968 811h92v33h-92zM545 490h46v22h-46z" fill="url(#b)"/>
      <path class="red" d=${seg(redLines)}/>
      ${[545, 587].map((y) => [557, 580, 602, 740, 793, 847, 976, 1030, 1083, 1137].map((x) => svg`<circle cx=${x} cy=${y === 545 && x < 610 ? 545 : x < 610 ? 576 : y} r="1.5" fill="#96474c"/>`))}
      ${[740, 793, 847, 901, 976, 1030, 1083, 1137].map((x) => svg`<circle cx=${x} cy="650" r="1.5" fill="#96474c"/>`)}
      ${[[1083, 678], [1137, 679], [1083, 722], [1137, 807], [1083, 807], [536, 522], [565, 522]].map(([x, y]) => svg`<circle cx=${x} cy=${y} r="1.5" fill="#96474c"/>`)}
      <path class="wall-back" d=${seg(walls)}/>
      <path class="wall" d=${seg(walls)}/>
      <path class="wall" stroke-width="3.500" d="M1154 535V858M1217 449V706"/>
      <path class="tile" d="M477 443q12-4 24 0v6M983 443q0-3 12-3M1039 449v-7q12-4 25 0v7M1119 449v-7q12-4 26 0v7M1200 449v-7q12-4 22 0M1218 467h9M1218 528h7q5 12 0 22h-7M1218 604h7q5 12 0 24h-7M1218 670h9M1211 690h14v20h-14zM1213 708l10-16M1210 848h14v16h-14zM1212 862l11-12M1224 864v62l3 10M1219 926h7v10"/>
      <path class="tile" d=${seg(greyWalls)}/>
      <path class="tile" d=${boxes(fixtures)}/>
      <path class="tile" d=${crossed.map(([x, y, w, h]) => `M${x} ${y}l${w} ${h}M${x + w} ${y}l${-w} ${h}`).join("")}/>
      <path fill="none" stroke="#b5686c" d="M976.500 723.500h49v59h-49zM622 511.500h97v-20M477 713h95v41h44M682 746.500h45.500v93M570 754v109.500h-93M727 841h166M893 693v113M1220 864v62M600 664.500h-57M552.500 715v14h13M829 841v-17h-25M742 840v-13h-12"/>
      <g class="tile">
        <circle cx="540" cy="750" r="13.500"/><circle cx="522.500" cy="841" r="13.500"/><circle cx="775.500" cy="715" r="13.500"/><circle cx="756" cy="805" r="13.500"/>
        ${[743, 760, 776, 792, 808].map((y) => svg`<path d="M499 ${y}h28l-10 10 10 6M500 ${y + 4}h5q14 4 0 9h-5v-9"/>`)}
        <path d="M500 722h4q18 5 0 10h-4zM505 717h20v12l11 10-10 3M532 825q0 17 17 18v-18M500 846q16 2 16 17M552 825v-20"/>
        ${[739, 755, 771].map((y) => svg`<path d="M796 ${y - 5}q-14 5 0 9M786 ${y + 8}h11"/>`)}
        ${[787, 803, 828].map((y) => svg`<path d="M796 ${y - 4}q-24 4 0 10"/>`)}
        <path d="M769 779h28M769 796h28M769 779l10 7-10 9M769 796l10 6-12 9h30M760 818l10 10v12M747 713q16 2 17 17M780 693q2 14 17 17M869 693q1 14 14 14v-14M864 718q-14 1-14 13h14M870 737q1 14 13 15v-15M922 693q1 14 13 14v-14"/>
        <path d="M895 722q0-21 20-21t20 21v55q0 19-20 19t-20-19zM915 719v63"/>
        ${[721, 726, 731, 736, 741, 746, 751, 756, 761, 766, 771, 776].map((y) => svg`<path d="M895 ${y}h41"/>`)}
        <path d="M702 693q0 13 13 14v-14M677 867q1 16 17 16v-16zM632 884q15 1 16 17M664 884q-15 1-16 17M563 702l9-10M563 862l9-10M725 862l9-9M725 702l8-9M886 702l8-9"/>
        <path d="M885 852h10v11h-10zM887 854l6 7M893 854l-6 7M1046 846h10v18h-10zM1048 850l6 11M1054 850l-6 11M805 742h5v3h-5zM805 746h5v3h-5zM733 692h17v6h-17z" stroke-width="2"/>
      </g>
      <path class="orange" d="M516 450h11v43h-11zM516 494v34h12v-18h-12M543 529h29v5h-29zM680 557h9v62h-9zM967 797h18v12h-18zM985 797h16v12h-16zM1001 798h60v11h-60zM1001 803h60M545 513h47M967 846h76M1087 850h61v5M990 665h18M1018 665h18M1045 665h18M1070 665h75" />
      <g class="red"><circle cx="642" cy="636" r="3"/><circle cx="652" cy="639" r="4.500"/><circle cx="647" cy="631" r="2.500"/><circle cx="1004" cy="687" r="3"/><circle cx="1014" cy="689" r="4.500"/><circle cx="1009" cy="682" r="2.500"/><path d="M649 543q3-4 6 0" stroke="#d01010"/></g>
      <path class="tile" d="M1037 691h27v18h-27zM1040 694h21v12h-21z"/><rect x="1045" y="694" width="12" height="9" fill="#85888b"/><rect x="1045" y="450" width="12" height="9" fill="#777a7d"/><rect x="1210" y="691" width="8" height="12" fill="#999"/>
      ${lamps.map(([x, y]) => svg`<rect x=${x - 10.500} y=${y - 3} width="21" height="6.500" fill="#252b33" stroke="#b8babd"/><rect x=${x - 5} y=${y - 3} width="12" height="6.500" fill="#c9cbcd"/>`)}
      <path class="pipe" d=${seg(pipes)}/><path class="pipe-core" d=${seg(pipes)}/>
      <path class="solid" d=${seg(solidPipes)}/>
      <path class="main" d="M500 610.500H1213M1029 611V862"/>
      <path class="hook" d=${hooks.map(([x, y]) => `M${x} ${y - 6}v7m-3 2l3-2 4-2`).join("")}/>
      <path class="hook" d="M500 606v7m0-2h8M946 694v5m0-1h8M963 668v5m0-1h7M953 812v5m0-1h10M1025 865l8 2M1213 607v6"/>
      ${pipes.filter((p) => Math.abs(p[3] - p[1]) + Math.abs(p[2] - p[0]) > 40).map(([a, b, c, d]) => [0.25, 0.62].map((k) => {
        const x = a + (c - a) * k, y = b + (d - b) * k;
        return svg`<path d="M${x - 3} ${y - 2}h4v2h-3v3h4" stroke="#e8eae8" stroke-width="1.3" fill="none"/>`;
      }))}
      ${heads.map(([x, y, a, b]) => svg`
        <circle cx=${x} cy=${y} r="3.300" fill="#960d12" stroke="#c01014" stroke-width="1.3"/>
        <path class="branch" d="M${x} ${y}L${a} ${b}"/>
        <path d="M${(x + a) / 2 - 3} ${(y + b) / 2 - 2}l3 4m1-4l-3 4m1-2h4" stroke="#e9efe9" stroke-width="1.200"/>
        <circle cx=${x} cy=${y} r="1.2" fill="#4ca01c"/><circle cx=${a} cy=${b} r="1.6" fill="#e02808"/>`)}
      ${[[773, 530], [854, 530], [935, 530], [1015, 530], [1096, 530], [1151, 530], [693, 530], [652, 597], [1151, 611], [1151, 657], [1151, 763], [1151, 817]].map(([x, y]) => svg`<circle cx=${x} cy=${y} r="3" fill="none" stroke="#d81216" stroke-width="1.3"/>`)}
      ${[[607, 540], [607, 579], [530, 464], [530, 491], [769, 551], [785, 653], [931, 594], [1176, 657], [1103, 657], [986, 698], [1015, 732], [972, 817], [1065, 842], [1092, 456], [1173, 456], [1208, 457], [1208, 551]].map(([x, y]) => svg`<circle cx=${x} cy=${y} r="1.9" fill="#f01010"/>`)}
      ${badges.map(([x, y]) => svg`<rect x=${x - 10} y=${y - 2.500} width="21" height="5" rx="2.500" fill="#3a3f46" stroke="#e4e6e8"/><text class="badge" x=${x - 7.500} y=${y + 1.600} textLength="16">F-0147</text>`)}
      ${[[1034, 763], [1064, 763], [1105, 763], [1139, 763]].map(([x, y]) => svg`<path d="M${x - 2} ${y - 3}h4v6h-4zM${x - 2} ${y}h4" stroke="#eee" fill="none"/>`)}
    </svg>`;
  }
}

/* ---------- dialog ---------- */

@customElement("schedule-dialog")
class ScheduleDialog extends LitElement {
  static styles = css`
    :host { display: flex; flex-direction: column; box-sizing: border-box; width: 423px; height: 289px; border-radius: 9px; overflow: hidden; background: #f0f0f0; color: #151515; font: 16px/20px "Liberation Sans", Arial, sans-serif; box-shadow: 1px 1px 1px 1px rgba(20, 24, 30, .75); }
    .bar { display: flex; align-items: center; justify-content: space-between; height: 43px; padding: 0 17px 0 11px; background: #f5f1ef; font: 16.2px "Open Sans", sans-serif; flex: none; }
    .title { margin-top: -3px; letter-spacing: .32px; }
    .close { margin-top: -2px; }
    .body { display: flex; flex-direction: column; padding: 6px 8px 0 12px; }
    .groups { display: flex; gap: 12px; }
    fieldset { box-sizing: border-box; height: 126px; margin: 0; padding: 0 0 0 12px; border: 1px solid #dcdcdc; min-width: 0; }
    legend { margin-left: -6px; padding: 0 2px; line-height: 18px; }
    .type { width: 160px; }
    .opts { width: 232px; }
    .row { display: flex; align-items: center; gap: 5px; height: 32px; }
    .opts .row:first-of-type { margin-top: 8px; }
    .type .row:first-of-type { margin: 14px 0 25px; }
    .radio, .check { box-sizing: border-box; width: 20px; height: 20px; border: 1px solid #858585; background: #f6f6f6; flex: none; }
    .type .row { gap: 4px; padding-left: 1px; }
    .radio { border-radius: 50%; }
    .radio.on { border: 6px solid #005fb8; background: #fff; }
    .check { border-radius: 4px; }
    .check.on { background: #0f5fb4; border-color: #0f5fb4; }
    .check svg { display: block; }
    .suffix { display: flex; justify-content: space-between; margin-top: 14px; height: 30px; }
    .suffix span { margin-top: 6px; }
    .field { box-sizing: border-box; width: 154px; height: 30px; padding: 2px 2px; border: 1px solid #777; background: #fff; }
    .buttons { display: flex; margin: 27px 1px 0 1px; height: 33px; }
    .btn { box-sizing: border-box; height: 33px; border: 1px solid #d0d0d0; border-radius: 4px; background: #fdfdfd; text-align: center; line-height: 31px; }
    .ok { width: 102px; border-color: #0067c0; }
    .cancel { width: 114px; margin-left: 44px; }
    .help { width: 97px; margin-left: auto; }
  `;
  render() {
    return html`
      <div class="bar"><span class="title">Sprinkler Head Schedule</span>
        <svg class="close" width="16" height="16" viewBox="0 0 16 16"><path d="M1 1l14 14M15 1 1 15" stroke="#1c1c1c" stroke-width="1.500"/></svg></div>
      <div class="body">
        <div class="groups">
          <fieldset class="type"><legend>Type of Schedule</legend>
            <div class="row"><span class="radio on"></span>Table</div>
            <div class="row"><span class="radio"></span>Text</div>
          </fieldset>
          <fieldset class="opts"><legend>Options</legend>
            <div class="row"><span class="check"></span>SIN in own column</div>
            <div class="row"><span class="check on"><svg width="18" height="18"><path d="M5 9.500l3 3L14 6" fill="none" stroke="#bcd8f4" stroke-width="1.300"/></svg></span>Insert Total</div>
            <div class="row"><span class="check"></span>Uppercase Headings</div>
          </fieldset>
        </div>
        <div class="suffix"><span>Total suffix</span><div class="field">This Floor</div></div>
        <div class="buttons"><div class="btn ok">OK</div><div class="btn cancel">Cancel</div><div class="btn help">Help</div></div>
      </div>`;
  }
}

/* ---------- application shell ---------- */

const col = (cls: string, cmds: Cmd[]) => html`<div class="col ${cls}">${cmds.map((c) => html`<ribbon-cmd .cmd=${c}></ribbon-cmd>`)}</div>`;
const chevron = (c: string) => html`<svg width="10" height="6" viewBox="0 0 10 6"><path d="M.500.500 5 5 9.500.500" fill="none" stroke=${c}/></svg>`;

@customElement("app-root")
class AppRoot extends LitElement {
  static styles = css`
    :host { display: flex; flex-direction: column; position: relative; width: 1449px; height: 1068px; overflow: hidden; background: #212830; color: #dcdfe2; font: 14.1px "Open Sans", "Noto Sans", sans-serif; }
    * { box-sizing: border-box; }
    .titlebar { display: flex; align-items: center; height: 37px; padding-bottom: 1px; background: #222932; flex: none; }
    .logo { margin: -1px 0 0 13px; }
    .tri { width: 0; height: 0; border: 4px solid transparent; border-top: 4.5px solid #dcdcdc; border-bottom: 0; flex: none; }
    .tri.s { border-width: 3.5px; border-top-width: 4px; border-bottom: 0; }
    .tri.dim { border-top-color: #8b9198; }
    .m4 { margin-left: 4px; } .m15 { margin-left: 15px; } .m7 { margin-left: 7px; } .m8 { margin-left: 8px; } .m9 { margin-left: 9px; } .m10 { margin-left: 10px; } .m11 { margin-left: 11px; }
    .custom { display: flex; flex-direction: column; align-items: center; gap: 3px; margin-left: 9px; }
    .custom i { width: 10px; height: 1.5px; background: #dcdcdc; }
    .share { margin-left: 5px; color: #72b7e8; letter-spacing: .1px; }
    .app { margin-left: 304px; width: 184px; letter-spacing: .3px; }
    .file { width: 414px; letter-spacing: .15px; }
    .go { width: 0; height: 0; border: 5px solid transparent; border-left: 6px solid #e2e2e2; border-right: 0; margin-right: 8px; margin-top: -1px; flex: none; }
    .search { flex: 1; height: 25px; margin-top: -1px; padding: 2px 0 0 2px; background: #454e60; color: #a8aeb8; font-style: italic; letter-spacing: -.22px; white-space: nowrap; overflow: hidden; }
    .titlebar span { white-space: nowrap; }
    .menus { display: grid; grid-template-columns: 561px 98px 93px 79px 48px 83px 80px; align-items: center; height: 25px; padding: 0 0 1px 8px; border-bottom: 2px solid #3b4453; color: #a9aeb4; flex: none; }
    .menus span:last-child { letter-spacing: -.1px; }
    .tabs { display: flex; align-items: flex-end; height: 30px; color: #a9aeb4; flex: none; }
    .tab { height: 25px; line-height: 26px; white-space: nowrap; }
    .tab.home { width: 499px; padding-left: 12px; }
    .tab.on { width: 95px; padding-right: 11px; background: #3b4453; color: #dfe2e5; text-align: right; }
    .tab.p { width: 78px; margin-left: 15px; letter-spacing: .1px; } .tab.f { width: 121px; letter-spacing: .07px; } .tab.e { width: 126px; letter-spacing: -.1px; }
    .mini { display: flex; align-items: center; justify-content: center; width: 20px; height: 11px; margin-bottom: 6px; background: #ededed; }
    .mini i { border: 3px solid transparent; border-bottom: 4px solid #666; border-top: 0; }
    .tabs .tri { border-width: 3px; border-top-width: 4px; border-bottom: 0; margin: 0 0 9px 4px; }
    .ribbon { display: flex; height: 148px; background: #3b4453; flex: none; }
    .panel { display: flex; flex-wrap: wrap; align-content: flex-start; padding-top: 5px; border-right: 2px solid #272e39; flex: none; }
    .p1 { width: 468px; padding-left: 6px; } .p2 { width: 387px; padding-left: 9px; } .p3 { width: 285px; padding-left: 9px; }
    .p4 { width: 309px; padding-left: 9px; border: 0; flex-wrap: nowrap; }
    .a { width: 86px; } .b { width: 145px; } .c { width: 127px; } .d { width: 102px; }
    .e { width: 120px; } .f { width: 120px; } .g { width: 135px; }
    .h { width: 141px; } .i { width: 133px; } .j { width: 187px; } .k { width: 112px; }
    .row4 { display: flex; margin-left: -2px; width: 377px; }
    .row4 .w1 { width: 106px; } .row4 .w2 { width: 43.5px; }
    .ptitle { display: flex; align-items: center; height: 28px; margin-left: 102px; }
    .ptitle .tri { margin-left: 7px; border-width: 5px; border-top-width: 5.5px; border-bottom: 0; }
    .pcol { display: flex; flex-direction: column; }
    .pcol .ptitle { margin-left: 21px; }
    .filetabs { display: flex; align-items: center; height: 34px; padding: 5px 0 0 15px; background: #222932; flex: none; }
    .burger { width: 16px; height: 14px; border-top: 2px solid #d8dadd; border-bottom: 2px solid #d8dadd; display: flex; align-items: center; }
    .burger i { width: 16px; height: 2px; background: #d8dadd; }
    .bars { display: flex; flex-direction: column; gap: 4px; height: 73px; padding-top: 5px; background: #3b4453; flex: none; }
    .barrow { display: flex; height: 30px; }
    .tb { display: flex; align-items: center; height: 30px; border: 2px solid #262d38; border-left: 0; background: #3b4453; flex: none; }
    .grip { width: 6px; height: 19px; background: radial-gradient(circle, #d2d5d9 .8px, transparent 1.2px) 0 0 / 3px 3px; flex: none; }
    .tb.one .grip, .tb.three .grip { width: 3px; margin-right: 3px; }
    .one { width: 498px; } .two { width: 722px; padding-left: 3px; border-left: 2px solid #262d38; }
    .three { width: 972px; }
    .one cad-icon, .three cad-icon { margin-left: 9px; }
    .one cad-icon:nth-child(2), .three cad-icon:nth-child(2) { margin-left: 4px; }
    .combo { display: flex; align-items: center; height: 26px; padding: 0 6px; background: #fff; color: #33373d; }
    .combo svg { margin-left: auto; }
    .lay { width: 377px; margin-left: 2px; margin-right: -5px; }
    .color { width: 250px; margin-left: 2px; padding-left: 3px; }
    .color i { width: 17px; height: 17px; margin: -3px 5px 0 0; background: #fa0000; border: 1px solid #666; }
    .lw { width: 305px; padding-left: 204px; letter-spacing: -.15px; }
    .style { width: 149px; margin-left: 5px; padding-left: 12px; background: #fafafa; color: #85888c; }
    .gap2 { width: 344px; flex: none; }
    .three .first { margin-left: 0; }
    .work { display: flex; flex: 1; min-height: 0; }
    .rail { display: flex; flex-direction: column; gap: 6px; width: 23px; padding-top: 6px; border-right: 1px solid #2b323d; background: #212830; flex: none; }
    .pal { background: #3b4453; width: 22px; writing-mode: vertical-rl; transform: rotate(180deg); font-size: 13.4px; line-height: 19px; letter-spacing: .3px; white-space: nowrap; }
    .lp { height: 434px; padding-top: 134px; } .pr { height: 275px; padding-top: 26px; letter-spacing: .15px; }
    .canvas { position: relative; flex: 1; overflow: hidden; }
    .canvas floor-plan { margin-left: -1px; }
    .view { position: absolute; left: 5px; top: 6px; font-size: 14.1px; letter-spacing: .18px; white-space: nowrap; }
    schedule-dialog { position: absolute; left: 542px; top: 202px; }
    .marks { position: absolute; left: 0; top: 0; }
    .callout { position: absolute; background: #fff; border: 2px solid #f00; color: #f00; font: 54.6px/60px "Liberation Sans", Arial, sans-serif; white-space: nowrap; }
    .c1 { left: 16px; top: 40px; width: 533px; height: 79px; padding: 4px 0 0 11px; }
    .c2 { left: 28px; top: 209px; width: 352px; height: 143px; padding: 4px 0 0 10px; }
    .accent { width: 48px; height: 2px; margin: -1px 0 -1px 41px; background: #3b4453; flex: none; }
  `;

  render() {
    return html`
      <div class="titlebar">
        <svg class="logo" width="30" height="28" viewBox="0 0 30 28"><path d="M3 4h27v23H6z" fill="#7d0d2e"/><path d="M0 4 5 0v24l-5 3z" fill="#f0587c"/><path d="M2 0h26v23H4z" fill="#e51050"/><path d="M0 3 5 0v23l-5 4z" fill="#ee4b76"/><text x="10" y="18" font-size="18" font-weight="700" fill="#fff" font-family="Open Sans">A</text></svg>
        <span class="tri m4"></span>
        <cad-icon class="m15" name="newFile" size="21"></cad-icon><cad-icon class="m9" name="open" size="21"></cad-icon>
        <cad-icon class="m10" name="save" size="20"></cad-icon><cad-icon class="m10" name="undo" size="21"></cad-icon><span class="tri s m7"></span>
        <cad-icon class="m10" name="redo" size="21"></cad-icon><span class="tri s dim m8"></span>
        <cad-icon class="m10" name="saveAs" size="21"></cad-icon><cad-icon class="m10" name="phone" size="20"></cad-icon>
        <div class="custom"><i></i><span class="tri"></span></div>
        <cad-icon class="m11" name="plane" size="20"></cad-icon><span class="share">Share</span>
        <span class="app">Autodesk AutoCAD 2024</span><span class="file">FP-Example.dwg</span>
        <span class="go"></span><div class="search">Type a keyword or phrase</div>
      </div>
      <div class="accent"></div>
      <div class="menus"><span>File</span><span>HydraTools</span><span>HydraCAD</span><span>Window</span><span>Help</span><span>Data View</span><span>Express</span></div>
      <div class="tabs"><div class="tab home">Home</div><div class="tab on">HydraCAD</div><div class="tab p">Plug-ins</div><div class="tab f">Featured Apps</div><div class="tab e">Express Tools</div><div class="mini"><i></i></div><span class="tri"></span></div>
      <div class="ribbon">
        <div class="panel p1">
          ${col("a", [{ icon: "line", label: "Line", big: true }, { icon: "main", label: "Main", big: true }, { icon: "caps", label: "Caps", caret: true }])}
          ${col("b", [{ icon: "rapidLine", label: "Rapid Line", caret: true, big: true }, { icon: "rapidMain", label: "Rapid Main", caret: true, big: true }, { icon: "sleeves", label: "Sleeves", caret: true }])}
          ${col("c", [{ icon: "sprink" }, { icon: "moveLine", label: "Move Line", caret: true }, { icon: "autoMain", label: "Auto Main" }, { icon: "moveMain", label: "Move Main", caret: true }])}
          ${col("d", [{ icon: "ell" }, { icon: "tee", label: "Tee" }, { icon: "teeRn", label: "Tee w/RN" }, { icon: "ell", label: "Double Ell" }])}
        </div>
        <div class="panel p2">
          ${col("e", [{ icon: "drops", label: "Standard", caret: true }, { icon: "flexible", label: "Flexible", caret: true }, { icon: "couplings", label: "Couplings", caret: true }])}
          ${col("f", [{ icon: "layout", label: "Layout" }, { icon: "bay", label: "Bay Space", caret: true }, { icon: "hangers", label: "Hangers", caret: true }])}
          ${col("g", [{ icon: "schedule", label: "Schedule" }, { icon: "nipple", label: "Riser Nipples", caret: true }, { icon: "sizing", label: "Pipe Sizing", caret: true }])}
          <div class="row4"><ribbon-cmd class="w1" .cmd=${{ icon: "riser", label: "3D Riser" }}></ribbon-cmd>
            ${["ucs", "refresh", "tag"].map((n) => html`<ribbon-cmd class="w2" .cmd=${{ icon: n }}></ribbon-cmd>`)}
            <ribbon-cmd .cmd=${{ icon: "valve", label: "3D Beam" }}></ribbon-cmd></div>
        </div>
        <div class="panel p3">
          ${col("h", [{ icon: "boundaries", label: "Boundaries", caret: true }, { icon: "tos", label: "Structure Elev", caret: true }, { icon: "checkElev", label: "Check Elev", caret: true }, { icon: "to3d", label: "Go to 3D", caret: true }])}
          ${col("i", [{ icon: "drops", label: "Drops/Sprigs" }, { icon: "pipeElev", label: "Pipe Elevation" }, { icon: "sloping", label: "Sloping Pipe", caret: true }, { icon: "to2d", label: "Go to 2D" }])}
          <div class="ptitle">Elevate<span class="tri"></span></div>
        </div>
        <div class="panel p4">
          ${col("j", [{ icon: "remote", label: "Remote Area", extras: ["info"] }, { icon: "supply", label: "Supply", extras: ["n123", "headBox", "calc"], caret: true }, { icon: "tags", label: "Listing Tags", caret: true }, { icon: "material", label: "Add Material", caret: true }])}
          <div class="pcol">${col("k", [{ icon: "flowing", label: "Flowing Heads" }, { label: "Calc Checkup", caret: true }, { icon: "overrides", label: "Overrides" }, { label: "List Checkup", caret: true }])}
            <div class="ptitle">Process<span class="tri"></span></div></div>
        </div>
      </div>
      <div class="filetabs"><div class="burger"><i></i></div></div>
      <div class="bars">
        <div class="barrow">
          <div class="tb one"><span class="grip"></span><cad-icon name="layerProps"></cad-icon><div class="combo lay">${chevron("#555")}</div>
            <cad-icon name="layerMatch"></cad-icon><cad-icon name="layerPrev"></cad-icon><cad-icon name="layerState"></cad-icon></div>
          <div class="tb two"><span class="grip"></span><div class="combo color"><i></i>ByLayer</div><div class="combo lw">ByLayer${chevron("#555")}</div><div class="combo style">ByColor${chevron("#bbb")}</div></div>
        </div>
        <div class="barrow"><div class="tb three"><span class="grip"></span><cad-icon name="sizing"></cad-icon><span class="gap2"></span>
          ${["layerBrush", "layerCheck", "layerArrow", "layerArrow2", "layerOne", "layerLast"].map((n, i) => html`<cad-icon class=${i ? "" : "first"} name=${n}></cad-icon>`)}</div></div>
      </div>
      <div class="work">
        <div class="rail"><div class="pal lp">Layer Properties Manager</div><div class="pal pr">Properties</div></div>
        <div class="canvas"><floor-plan></floor-plan><div class="view">[−][Top][2D Wireframe]</div></div>
      </div>
      <schedule-dialog></schedule-dialog>
      <svg class="marks" width="1449" height="600" viewBox="0 0 1449 600" fill="none" stroke="#f00" stroke-linecap="round">
        <path stroke-width="2" d="M549 79H599L676 90M380 281H432L540 424"/>
        <path stroke-width="5" d="M683 108A22 22 0 1 1 720 89M719 80A22 22 0 0 1 756 89M756 80A22 22 0 0 1 793 89M793 80A22 22 0 0 1 830 97M831 88A22 22 0 1 1 822 132M830 134A22 22 0 0 1 787 133M787 145A22 22 0 0 1 751 133M751 145A22 22 0 0 1 714 133M717 143A22 22 0 1 1 694 107"/>
        <path stroke-width="5" d="M536 453A21 21 0 1 1 572 437M572 428A21 21 0 0 1 607 437M607 428A21 21 0 0 1 641 437M641 428A21 21 0 0 1 676 447M679 438A21.500 21.500 0 0 1 675 480M682 476A21 21 0 1 1 651 497M651 508A21 21 0 0 1 616 497M616 508A21 21 0 0 1 581 497M581 508A21 21 0 0 1 547 486M544 494A21.500 21.500 0 0 1 548 454"/>
      </svg>
      <div class="callout c1">1. Click "Schedule"</div>
      <div class="callout c2">2. Click "OK"</div>`;
  }
}
